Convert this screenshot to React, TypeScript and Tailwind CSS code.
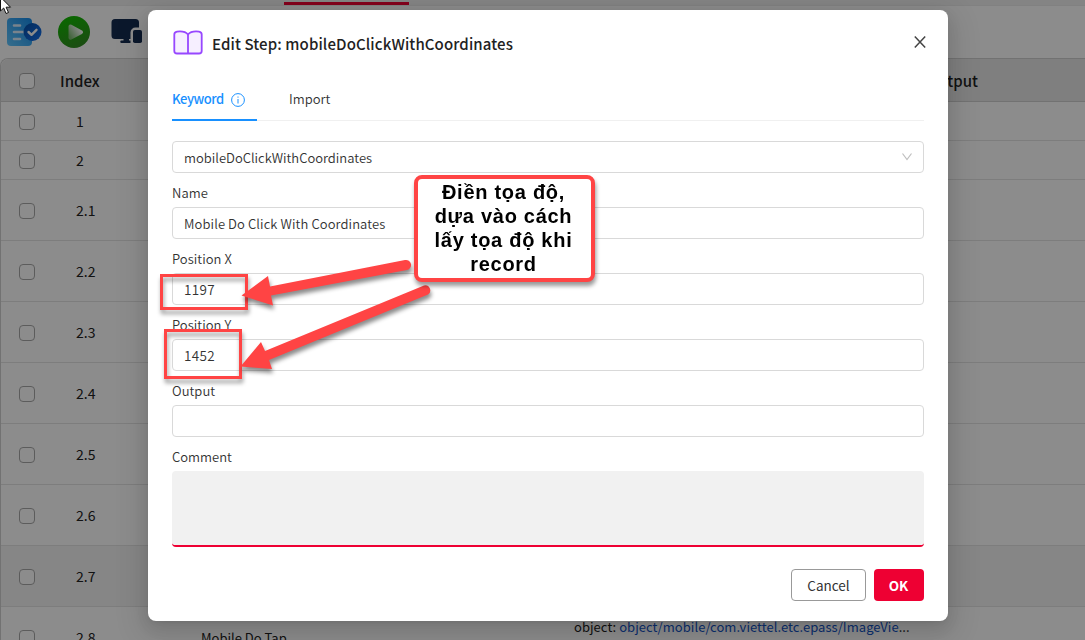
import { type ReactNode } from 'react';

const rows = [
  { index: '1', tall: false, shaded: false },
  { index: '2', tall: false, shaded: false },
  { index: '2.1', tall: true, shaded: false },
  { index: '2.2', tall: true, shaded: false },
  { index: '2.3', tall: true, shaded: false },
  { index: '2.4', tall: true, shaded: false },
  { index: '2.5', tall: true, shaded: false },
  { index: '2.6', tall: true, shaded: false },
  { index: '2.7', tall: true, shaded: true },
  { index: '2.8', tall: true, shaded: false },
];

function Checkbox() {
  return <span className="mt-px ml-[18px] block size-4 shrink-0 rounded-[4px] border border-[#a8a8a8] bg-white" />;
}

function TaskIcon() {
  return (
    <svg width="36" height="30" viewBox="0 0 36 30" fill="none">
      <defs>
        <linearGradient id="doc" x1="0" y1="1" x2="1" y2="0">
          <stop stopColor="#63c8ff" />
          <stop offset="1" stopColor="#168ceb" />
        </linearGradient>
        <linearGradient id="badge" x1="0" y1="0" x2="1" y2="1">
          <stop stopColor="#044fa8" />
          <stop offset="1" stopColor="#1672ef" />
        </linearGradient>
      </defs>
      <rect x="1" y="1" width="25" height="28" rx="4" fill="url(#doc)" />
      <path d="M8 8.500h6M8 15h11M8 22h6" stroke="#dceeff" strokeWidth="2.600" strokeLinecap="round" />
      <circle cx="26.500" cy="15" r="9" fill="url(#badge)" />
      <path d="m22.500 15 3 2.800 5-5" stroke="#fff" strokeWidth="2.400" strokeLinecap="round" strokeLinejoin="round" />
    </svg>
  );
}

function RunIcon() {
  return (
    <svg width="34" height="34" viewBox="0 0 34 34" fill="none">
      <defs>
        <linearGradient id="run" x1="0.3" y1="0" x2="0.7" y2="1">
          <stop stopColor="#12bd00" />
          <stop offset="1" stopColor="#348b24" />
        </linearGradient>
        <linearGradient id="tri" x1="0" y1="1" x2="1" y2="0.3">
          <stop stopColor="#7bb96f" />
          <stop offset="1" stopColor="#fff" />
        </linearGradient>
      </defs>
      <circle cx="17" cy="17" r="16" fill="url(#run)" />
      <path d="M13.500 11.500v11.200L24 17.200Z" fill="url(#tri)" stroke="url(#tri)" strokeWidth="4" strokeLinejoin="round" />
    </svg>
  );
}

function DevicesIcon() {
  return (
    <svg width="32" height="26" viewBox="0 0 32 26" fill="#152c50">
      <path d="M4 0h20.500a3.500 3.500 0 0 1 3.500 3.500V8.500h-3.500a5 5 0 0 0-5 5V20H18v1.500h1.500V24H10.500a1.200 1.200 0 0 1 0-2.500H12.500V20H4a3.500 3.500 0 0 1-3.500-3.500v-13A3.500 3.500 0 0 1 4 0Z" />
      <rect x="22" y="11" width="9" height="13" rx="1.800" />
    </svg>
  );
}

function Field({ label, value, numeric = false }: { label: string; value?: string; numeric?: boolean }) {
  return (
    <label className="flex flex-col font-[350]">
      <span className="flex h-[34px] items-center pt-[6px] text-[13px] tracking-[0.05px] text-[#333]">{label}</span>
      <span
        className={`flex h-8 items-center rounded-[4px] border border-[#d9d9d9] bg-white px-[11px] text-[#333] ${numeric ? 'text-[13.5px] tracking-[0.3px]' : 'pt-[2px] text-[13px] tracking-[0.1px]'}`}
      >
        {value}
      </span>
    </label>
  );
}

function Dialog({ children }: { children: ReactNode }) {
  return (
    <div className="absolute top-[10px] left-[148px] flex h-[611px] w-[800px] flex-col rounded-lg bg-white px-6 shadow-[0_3px_6px_-4px_rgba(0,0,0,.12),0_6px_16px_rgba(0,0,0,.08),0_9px_28px_8px_rgba(0,0,0,.1)]">
      {children}
    </div>
  );
}

export default function App() {
  return (
    <div className="relative h-[640px] w-[1085px] overflow-hidden bg-white font-['Noto_Sans_CJK_SC',sans-serif] text-[#222]">
      <div className="flex h-full flex-col">
        <div className="flex h-[6px] shrink-0 items-end border-b border-[#ebebeb] bg-[#f1f1f1]">
          <div className="ml-[284px] h-[3px] w-[125px] bg-[#ee0033]" />
        </div>
        <div className="flex h-[52px] shrink-0 items-center pl-[6px]">
          <TaskIcon />
          <div className="ml-[15px]"><RunIcon /></div>
          <div className="ml-5"><DevicesIcon /></div>
        </div>
        <div className="flex flex-1 flex-col rounded-tl-lg border-t border-l border-[#d0d0d0]">
          <div className="flex h-[43px] shrink-0 items-center rounded-tl-lg border-b border-[#cfcfcf] bg-[#e8e8e8] text-[15px] font-medium">
            <Checkbox />
            <span className="ml-[25px] pt-[2px]">Index</span>
            <span className="ml-[827px] pt-[2px]">Output</span>
          </div>
          {rows.map((row) => (
            <div
              key={row.index}
              className={`flex shrink-0 items-center border-b border-[#e4e4e4] text-[14px] ${row.tall ? 'h-[61px]' : 'h-[39px]'} ${row.shaded ? 'bg-[#f5f5f5]' : ''}`}
            >
              <Checkbox />
              <span className="ml-[41px] w-[125px] pt-px">{row.index}</span>
              {row.index === '2.8' && (
                <>
                  <span className="w-[373px] pt-px text-[13px]">Mobile Do Tap</span>
                  <span className="-mt-[20px] text-[13px] tracking-[0.04px]">
                    object: <span className="text-[#1456c8]">object/mobile/com.viettel.etc.epass/ImageVie</span>...
                  </span>
                </>
              )}
            </div>
          ))}
        </div>
      </div>
      <div className="absolute inset-0 bg-black/45" />

      <Dialog>
        <div className="flex h-[66px] items-center">
          <svg width="32" height="28" viewBox="0 0 32 28" className="shrink-0" fill="#f6efff" stroke="#9747ff" strokeWidth="1.800" strokeLinejoin="round">
            <path d="M16 5.500C14 3 10 2 5 2.600Q2.300 3 2.300 5.500V22Q2.300 24.500 5 24.500H27Q29.700 24.500 29.700 22V5.500Q29.700 3 27 2.600C22 2 18 3 16 5.500Z" />
            <path d="M16 5.500v19" />
          </svg>
          <h1 className="ml-2 pt-[2px] text-[15px] font-medium tracking-[0.11px] whitespace-nowrap text-[#222]">Edit Step: mobileDoClickWithCoordinates</h1>
          <svg width="14" height="14" viewBox="0 0 14 14" className="-mt-[2px] mr-[-3px] ml-auto" fill="none" stroke="#444" strokeWidth="1.500">
            <path d="m1.800 1.500 10.400 11M12.200 1.500l-10.400 11" />
          </svg>
        </div>
        <div className="flex h-[45px] items-stretch border-b border-[#f0f0f0] text-[13px]">
          <div className="mb-[-1px] flex w-[85px] items-center border-b-2 border-[#1890ff] pt-[3px] font-medium text-[#1890ff]">
            <span className="w-[51px] tracking-[-0.48px]">Keyword</span>
            <svg width="14" height="14" viewBox="0 0 14 14" className="mt-px ml-2" fill="none" stroke="#1890ff">
              <circle cx="7" cy="7" r="6.400" />
              <path d="M7 6v4.500M7 3.500v1.200" />
            </svg>
          </div>
          <div className="ml-8 flex items-center pt-px font-[350] text-[#333]">Import</div>
        </div>
        <div className="mt-5 flex h-8 shrink-0 items-center justify-between rounded-[4px] border border-[#d9d9d9] pr-[10px] pl-[11px] text-[13px] font-[350] text-[#333]">
          <span className="pt-[2px]">mobileDoClickWithCoordinates</span>
          <svg width="12" height="10" viewBox="0 0 12 10" fill="none" stroke="#bfbfbf" strokeWidth="1.200">
            <path d="m1.500 1.500 4.500 6 4.500-6" />
          </svg>
        </div>
        <Field label="Name" value="Mobile Do Click With Coordinates" />
        <Field label="Position X" value="1197" numeric />
        <Field label="Position Y" value="1452" numeric />
        <Field label="Output" />
        <label className="flex flex-col font-[350]">
          <span className="flex h-[34px] items-center pt-[6px] text-[13px] text-[#333]">Comment</span>
          <span className="h-[76px] rounded-[4px] border-b-2 border-[#ee0033] bg-[#f1f1f1]" />
        </label>
        <div className="mt-[22px] flex justify-end gap-2 text-[13.5px]">
          <button className="h-8 w-[75px] rounded-[4px] border border-[#999] pt-px text-[#333]">Cancel</button>
          <button className="h-8 w-[50px] rounded-[4px] bg-[#ee0033] pt-px pr-px font-bold text-white">OK</button>
        </div>
      </Dialog>

      <div className="absolute top-[274px] left-[160px] h-9 w-[88px] border-[3px] border-[#f44] drop-shadow-[1px_4px_2px_rgba(0,0,0,.4)]" />
      <div className="absolute top-[329px] left-[164px] h-[50px] w-[78px] border-[3px] border-[#f44] drop-shadow-[1px_4px_2px_rgba(0,0,0,.4)]" />
      <svg className="absolute top-[250px] left-[235px] drop-shadow-[1px_4px_2px_rgba(0,0,0,.45)]" width="205" height="130" viewBox="235 250 205 130" fill="#f44">
        <path d="M241.500 295.500 268 276 270 286.500 405 260A5 5 0 0 1 407 270L271 295.500 273 305.500Z" />
        <path d="M240.500 366.500 261 342 265 351 424 285.500A5 5 0 0 1 428 294.500L269 360 272 369Z" />
      </svg>
      <div className="absolute top-[175px] left-[414px] h-[107px] w-[181px] rounded-[8px] border-4 border-[#f44] bg-white pt-px pr-[2px] text-center font-['Liberation_Sans',sans-serif] text-[20px] leading-6 font-bold tracking-[0.72px] text-black drop-shadow-[1px_4px_2px_rgba(0,0,0,.4)]">
        <div>Điền tọa độ,</div>
        <div>dựa vào cách</div>
        <div>lấy tọa độ khi</div>
        <div>record</div>
      </div>
      <svg className="absolute top-[-4px] left-0" width="13" height="19" viewBox="0 0 13 19" fill="#fff" stroke="#111">
        <path d="M.5 1v14l3.200-3 2.300 5.500 2.500-1-2.400-5.300H10.500Z" />
      </svg>
    </div>
  );
}
